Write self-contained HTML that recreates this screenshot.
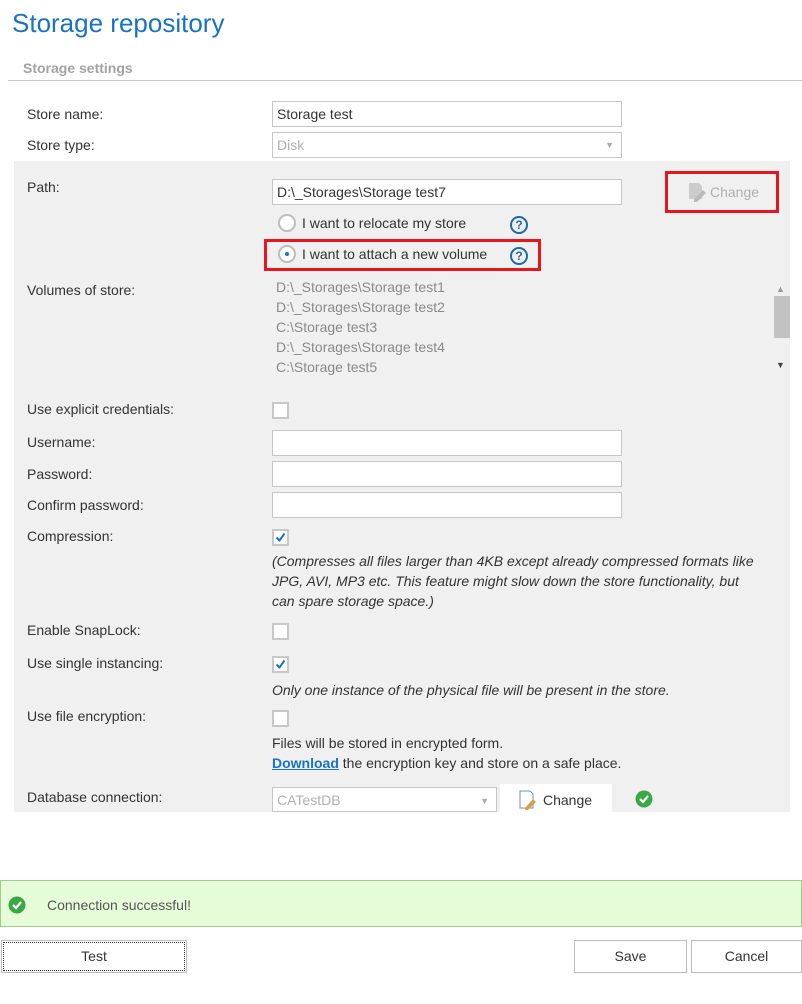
<!DOCTYPE html>
<html><head><meta charset="utf-8"><style>
body{margin:0;width:802px;height:1004px;background:#fff;font-family:"Liberation Sans",sans-serif;font-size:14px;color:#333;position:relative;overflow:hidden}
.a{position:absolute;line-height:18px;white-space:nowrap}
.in{position:absolute;background:#fff;border:1px solid #c6c6c6;box-sizing:border-box;height:26px;line-height:24px;padding-left:4px;color:#333;font-size:14px}
.cb{position:absolute;width:13px;height:13px;border:2px solid #c8c8c8;background:#fff}
.cb svg{position:absolute;left:1px;top:1px}
.red{position:absolute;border:3px solid #e8141e;box-sizing:border-box}
.q{position:absolute;width:14px;height:14px;border:2px solid #1e6aa8;border-radius:50%;color:#1e6aa8;font-weight:bold;font-size:12px;line-height:14px;text-align:center}
.gr{color:#8a8a8a}
.btn{position:absolute;border:1px solid #bdbdbd;background:#fff;box-sizing:border-box;text-align:center;line-height:30px;color:#333}
</style></head><body>
<div class="a" style="left:12px;top:7px;font-size:26px;line-height:32px;color:#1a73c0">Storage repository</div>
<div class="a" style="left:23px;top:59px;font-weight:bold;color:#a3a3a3;font-size:14px">Storage settings</div>
<div style="position:absolute;left:8px;top:80px;width:794px;height:1px;background:#c8c8c8"></div>
<div style="position:absolute;left:14px;top:161px;width:776px;height:651px;background:#f0f0f0"></div>

<div class="a" style="left:27px;top:105px">Store name:</div>
<div class="in" style="left:272px;top:101px;width:350px">Storage test</div>
<div class="a" style="left:27px;top:136px">Store type:</div>
<div class="in" style="left:272px;top:132px;width:350px;color:#b0b0b0">Disk<span style="position:absolute;right:7px;top:0;font-size:9px;color:#aaa">▼</span></div>

<div class="a" style="left:27px;top:178px">Path:</div>
<div class="in" style="left:272px;top:179px;width:350px">D:\_Storages\Storage test7</div>
<div class="red" style="left:665px;top:171px;width:114px;height:42px"></div>
<svg style="position:absolute;left:686px;top:181px" width="22" height="22"><path d="M3 2h10l3 3v13H3z" fill="#ccc"/><path d="M8 18l9-9 3 3-9 9H8z" fill="#bbb"/></svg>
<div class="a" style="left:710px;top:183px;color:#b0b0b0">Change</div>

<div style="position:absolute;left:278px;top:214px;width:14px;height:14px;border:2px solid #bdbdbd;border-radius:50%;background:#fff"></div>
<div class="a" style="left:302px;top:214px">I want to relocate my store</div>
<div class="q" style="left:510px;top:216px">?</div>
<div class="red" style="left:264px;top:239px;width:277px;height:32px"></div>
<div style="position:absolute;left:278px;top:245px;width:14px;height:14px;border:2px solid #bdbdbd;border-radius:50%;background:#fff"><div style="position:absolute;left:5px;top:5px;width:4px;height:4px;border-radius:50%;background:#1a73c0"></div></div>
<div class="a" style="left:302px;top:245px">I want to attach a new volume</div>
<div class="q" style="left:510px;top:247px">?</div>

<div class="a" style="left:27px;top:281px">Volumes of store:</div>
<div class="a gr" style="left:276px;top:277px;line-height:20px">D:\_Storages\Storage test1<br>D:\_Storages\Storage test2<br>C:\Storage test3<br>D:\_Storages\Storage test4<br>C:\Storage test5</div>
<div class="a" style="left:776px;top:280px;font-size:9px;color:#999">▲</div>
<div style="position:absolute;left:774px;top:296px;width:16px;height:42px;background:#c2c2c2"></div>
<div class="a" style="left:776px;top:356px;font-size:9px;color:#444">▼</div>

<div class="a" style="left:27px;top:400px">Use explicit credentials:</div>
<div class="cb" style="left:272px;top:402px"></div>
<div class="a" style="left:27px;top:433px">Username:</div>
<div class="in" style="left:272px;top:430px;width:350px"></div>
<div class="a" style="left:27px;top:465px">Password:</div>
<div class="in" style="left:272px;top:461px;width:350px"></div>
<div class="a" style="left:27px;top:496px">Confirm password:</div>
<div class="in" style="left:272px;top:492px;width:350px"></div>

<div class="a" style="left:27px;top:527px">Compression:</div>
<div class="cb" style="left:272px;top:529px"><svg width="11" height="11"><path d="M1.5 5.5l3 3 5-7" stroke="#1a73c0" stroke-width="2" fill="none"/></svg></div>
<div class="a" style="left:272px;top:551px;font-style:italic;line-height:20px">(Compresses all files larger than 4KB except already compressed formats like<br>JPG, AVI, MP3 etc. This feature might slow down the store functionality, but<br>can spare storage space.)</div>

<div class="a" style="left:27px;top:621px">Enable SnapLock:</div>
<div class="cb" style="left:272px;top:623px"></div>
<div class="a" style="left:27px;top:654px">Use single instancing:</div>
<div class="cb" style="left:272px;top:656px"><svg width="11" height="11"><path d="M1.5 5.5l3 3 5-7" stroke="#1a73c0" stroke-width="2" fill="none"/></svg></div>
<div class="a" style="left:272px;top:681px;font-style:italic">Only one instance of the physical file will be present in the store.</div>
<div class="a" style="left:27px;top:707px">Use file encryption:</div>
<div class="cb" style="left:272px;top:710px"></div>
<div class="a" style="left:272px;top:734px">Files will be stored in encrypted form.</div>
<div class="a" style="left:272px;top:754px"><span style="color:#1a73c0;text-decoration:underline;font-weight:bold">Download</span> the encryption key and store on a safe place.</div>

<div class="a" style="left:27px;top:788px">Database connection:</div>
<div class="in" style="left:272px;top:787px;width:225px;height:25px;color:#b0b0b0">CATestDB<span style="position:absolute;right:7px;top:1px;font-size:9px;color:#aaa">▼</span></div>
<div style="position:absolute;left:500px;top:784px;width:112px;height:28px;background:#fff"></div>
<svg style="position:absolute;left:518px;top:789px" width="22" height="22"><path d="M2 2h10l3 3v14H2z" fill="#fff" stroke="#7a8ea8"/><path d="M7 19l8-9 3 3-8 8H7z" fill="#d4a24a"/></svg>
<div class="a" style="left:543px;top:791px">Change</div>
<svg style="position:absolute;left:635px;top:790px" width="18" height="18"><circle cx="9" cy="9" r="8.5" fill="#3aa845"/><path d="M5 9l3 3 5-6" stroke="#fff" stroke-width="2.2" fill="none"/></svg>

<div style="position:absolute;left:0;top:880px;width:802px;height:47px;background:#e6fcd9;border:1px solid #9fcc88;box-sizing:border-box"></div>
<svg style="position:absolute;left:8px;top:896px" width="18" height="18"><circle cx="9" cy="9" r="8.5" fill="#3aa845"/><path d="M5 9l3 3 5-6" stroke="#fff" stroke-width="2.2" fill="none"/></svg>
<div class="a" style="left:47px;top:896px;color:#555">Connection successful!</div>

<div class="btn" style="left:1px;top:940px;width:186px;height:33px;outline:1px dotted #333;outline-offset:-3px">Test</div>
<div class="btn" style="left:574px;top:940px;width:113px;height:33px">Save</div>
<div class="btn" style="left:691px;top:940px;width:111px;height:33px">Cancel</div>
</body></html>
